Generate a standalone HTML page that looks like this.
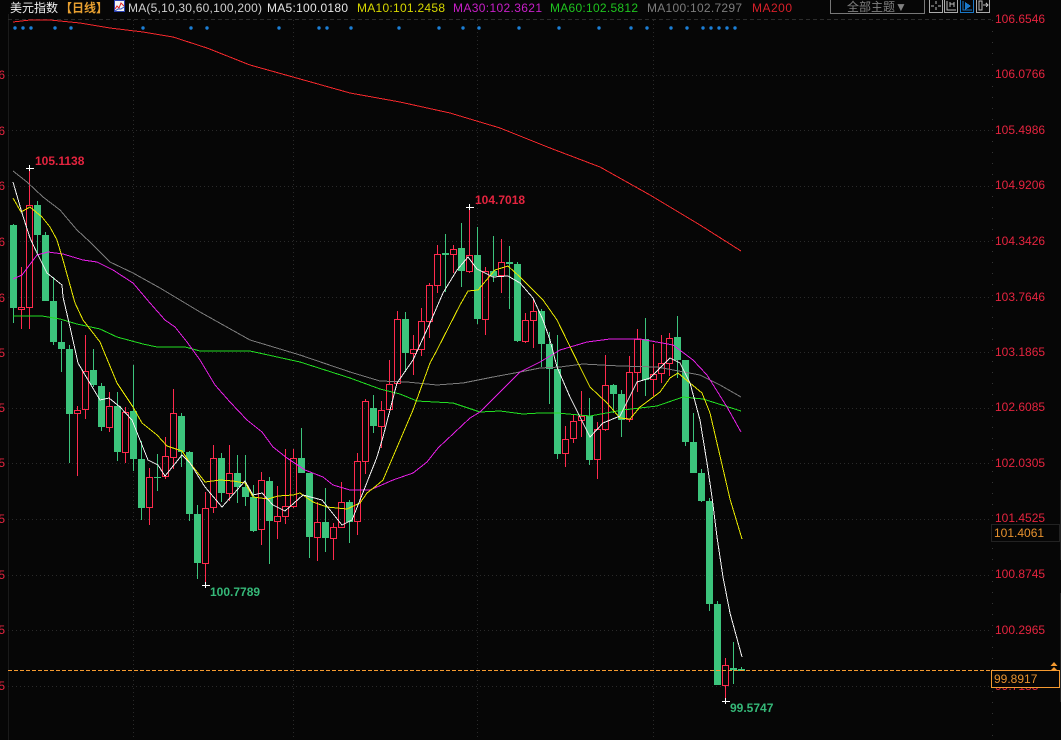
<!DOCTYPE html>
<html lang="zh">
<head>
<meta charset="utf-8">
<title>美元指数 日线</title>
<style>
html,body{margin:0;padding:0;background:#060606;width:1061px;height:740px;overflow:hidden}
svg{display:block;position:absolute;left:0;top:0}
text{font-family:"Liberation Sans","Noto Sans CJK SC",sans-serif;font-size:12px}
.ax{fill:#e5243f}
.b{font-weight:bold}
</style>
</head>
<body>
<svg width="1061" height="740" viewBox="0 0 1061 740" xmlns="http://www.w3.org/2000/svg">
<rect width="1061" height="740" fill="#060606"/>

<!-- axis + grid -->
<g shape-rendering="crispEdges" fill="none">
<path d="M8.5 14V740" stroke="#1a1a1a"/>
<path d="M8 19.5H991" stroke="#2c2c2c" stroke-dasharray="4 3"/>
<path d="M8 75.5H991M8 130.5H991M8 186.5H991M8 241.5H991M8 297.5H991M8 352.5H991M8 408.5H991M8 463.5H991M8 519.5H991M8 575.5H991M8 630.5H991M8 686.5H991" stroke="#2a2a2a" stroke-dasharray="1 3"/>
<path d="M133.5 20V740M293.5 20V740M477.5 20V740M653.5 20V740" stroke="#2a2a2a" stroke-dasharray="1 3"/>
<path d="M992.5 20V740" stroke="#333" stroke-dasharray="1 10"/>
<path d="M1060.5 480V560M1060.5 593V702" stroke="#222"/>
</g>

<!-- left clipped labels -->
<g class="ax" text-anchor="end">
<text x="5" y="79" class="ax">6</text>
<text x="5" y="135" class="ax">6</text>
<text x="5" y="190" class="ax">6</text>
<text x="5" y="246" class="ax">6</text>
<text x="5" y="302" class="ax">6</text>
<text x="5" y="357" class="ax">5</text>
<text x="5" y="412" class="ax">5</text>
<text x="5" y="467" class="ax">5</text>
<text x="5" y="523" class="ax">5</text>
<text x="5" y="579" class="ax">5</text>
<text x="5" y="634" class="ax">5</text>
<text x="5" y="690" class="ax">5</text>
</g>

<!-- signal dots -->
<g fill="#1c7fd6">
<circle cx="15" cy="28" r="1.7"/><circle cx="23" cy="28" r="1.7"/><circle cx="31" cy="28" r="1.7"/><circle cx="55" cy="28" r="1.7"/><circle cx="71" cy="28" r="1.7"/><circle cx="143" cy="28" r="1.7"/><circle cx="191" cy="28" r="1.7"/><circle cx="207" cy="28" r="1.7"/><circle cx="279" cy="28" r="1.7"/><circle cx="319" cy="28" r="1.7"/><circle cx="327" cy="28" r="1.7"/><circle cx="351" cy="28" r="1.7"/><circle cx="399" cy="28" r="1.7"/><circle cx="439" cy="28" r="1.7"/><circle cx="463" cy="28" r="1.7"/><circle cx="479" cy="28" r="1.7"/><circle cx="519" cy="28" r="1.7"/><circle cx="559" cy="28" r="1.7"/><circle cx="599" cy="28" r="1.7"/><circle cx="631" cy="28" r="1.7"/><circle cx="647" cy="28" r="1.7"/><circle cx="671" cy="28" r="1.7"/><circle cx="687" cy="28" r="1.7"/><circle cx="703" cy="28" r="1.7"/><circle cx="711" cy="28" r="1.7"/><circle cx="719" cy="28" r="1.7"/><circle cx="727" cy="28" r="1.7"/><circle cx="735" cy="28" r="1.7"/>
</g>

<!-- green candles -->
<g shape-rendering="crispEdges">
<path fill="none" stroke="#3cc47c" d="M13.5 224V323M37.5 201V253M45.5 232V301M53.5 277V345M61.5 321V372M69.5 345V463M93.5 349V387M101.5 383V431M117.5 392V461M133.5 365V471M141.5 441V520M157.5 454V491M181.5 413V467M189.5 451V521M197.5 505V579M221.5 453V502M237.5 455V503M245.5 455V506M253.5 485V532M269.5 477V564M301.5 428V473M309.5 473V558M325.5 488V552M349.5 500V543M373.5 395V433M405.5 312V372M445.5 234V292M461.5 223V287M477.5 227V324M493.5 236V282M509.5 246V309M517.5 262V342M541.5 309V367M549.5 332V404M557.5 335V459M589.5 398V465M613.5 384V413M621.5 390V437M645.5 318V396M677.5 316V378M685.5 360V446M693.5 413V473M701.5 469V502M709.5 498V611M717.5 601V685M733.5 642V684M741.5 667V671"/>
<path fill="#3cc47c" d="M10 225h7V308h-7zM34 205h7V235h-7zM42 235h7V301h-7zM50 301h7V342h-7zM58 342h7V349h-7zM66 349h7V414h-7zM90 370h7V385h-7zM98 386h7V427h-7zM114 406h7V452h-7zM130 411h7V459h-7zM138 459h7V508h-7zM154 477h7V478h-7zM178 416h7V452h-7zM186 452h7V514h-7zM194 514h7V563h-7zM218 458h7V493h-7zM234 473h7V487h-7zM242 487h7V497h-7zM250 497h7V531h-7zM266 481h7V521h-7zM298 458h7V473h-7zM306 473h7V537h-7zM322 522h7V538h-7zM346 502h7V522h-7zM370 408h7V426h-7zM402 319h7V353h-7zM442 253h7V255h-7zM458 248h7V271h-7zM474 255h7V319h-7zM490 271h7V276h-7zM506 262h7V264h-7zM514 264h7V341h-7zM538 311h7V344h-7zM546 344h7V369h-7zM554 369h7V454h-7zM586 416h7V460h-7zM610 385h7V394h-7zM618 394h7V420h-7zM642 339h7V380h-7zM674 337h7V360h-7zM682 360h7V442h-7zM690 442h7V473h-7zM698 473h7V501h-7zM706 501h7V604h-7zM714 604h7V685h-7zM730 668h7V670h-7zM738 669h7V671h-7z"/>
</g>

<!-- red candles -->
<g shape-rendering="crispEdges" fill="none" stroke="#ff2a4d">
<path d="M21.5 267V307M21.5 310V329M29.5 168V205M29.5 308V329M77.5 406V410M77.5 414V476M85.5 335V371M85.5 410V419M109.5 392V406M109.5 428V432M125.5 407V412M125.5 453V463M149.5 468V477M149.5 508V525M165.5 437V456M165.5 477V479M173.5 389V413M173.5 458V469M205.5 492V508M205.5 564V585M213.5 445V458M213.5 508V513M229.5 445V473M229.5 494V501M261.5 472V480M261.5 530V545M277.5 486V516M277.5 522V539M285.5 449V506M285.5 517V524M293.5 449V458M293.5 507V508M317.5 502V522M317.5 538V561M333.5 523V527M333.5 539V560M341.5 482V502M357.5 453V461M357.5 522V535M365.5 399V401M365.5 462V474M381.5 401V410M381.5 427V448M389.5 360V384M397.5 311V319M413.5 335V349M413.5 354V375M421.5 308V321M421.5 350V356M429.5 283V285M429.5 322V338M437.5 245V254M437.5 286V293M453.5 245V249M453.5 255V273M469.5 207V255M469.5 272V273M485.5 267V271M485.5 320V335M501.5 239V262M501.5 276V293M525.5 313V320M525.5 342V343M533.5 299V311M533.5 321V348M565.5 426V439M565.5 454V467M573.5 414V421M573.5 439V443M581.5 391V416M581.5 421V437M597.5 422V429M597.5 460V479M605.5 355V385M605.5 430V431M629.5 356V372M629.5 420V422M637.5 329V339M637.5 373V392M653.5 344V374M653.5 380V396M661.5 335V363M661.5 374V383M669.5 333V338M669.5 364V376M725.5 658V665M725.5 686V701"/>
<path d="M18.5 307.5h6V309.5h-6zM26.5 205.5h6V307.5h-6zM74.5 410.5h6V413.5h-6zM82.5 371.5h6V409.5h-6zM106.5 406.5h6V427.5h-6zM122.5 412.5h6V452.5h-6zM146.5 477.5h6V507.5h-6zM162.5 456.5h6V476.5h-6zM170.5 413.5h6V457.5h-6zM202.5 508.5h6V563.5h-6zM210.5 458.5h6V507.5h-6zM226.5 473.5h6V493.5h-6zM258.5 480.5h6V529.5h-6zM274.5 516.5h6V521.5h-6zM282.5 506.5h6V516.5h-6zM290.5 458.5h6V506.5h-6zM314.5 522.5h6V537.5h-6zM330.5 527.5h6V538.5h-6zM338.5 502.5h6V527.5h-6zM354.5 461.5h6V521.5h-6zM362.5 401.5h6V461.5h-6zM378.5 410.5h6V426.5h-6zM386.5 384.5h6V409.5h-6zM394.5 319.5h6V383.5h-6zM410.5 349.5h6V353.5h-6zM418.5 321.5h6V349.5h-6zM426.5 285.5h6V321.5h-6zM434.5 254.5h6V285.5h-6zM450.5 249.5h6V254.5h-6zM466.5 255.5h6V271.5h-6zM482.5 271.5h6V319.5h-6zM498.5 262.5h6V275.5h-6zM522.5 320.5h6V341.5h-6zM530.5 311.5h6V320.5h-6zM562.5 439.5h6V453.5h-6zM570.5 421.5h6V438.5h-6zM578.5 416.5h6V420.5h-6zM594.5 429.5h6V459.5h-6zM602.5 385.5h6V429.5h-6zM626.5 372.5h6V419.5h-6zM634.5 339.5h6V372.5h-6zM650.5 374.5h6V379.5h-6zM658.5 363.5h6V373.5h-6zM666.5 338.5h6V363.5h-6zM722.5 665.5h6V685.5h-6z"/>
</g>

<!-- moving averages -->
<g fill="none" stroke-width="1" shape-rendering="crispEdges">
<polyline stroke="#f5282c" points="13,22 30,20 50,20 80,23 110,28 143,32 173,37 207,48 250,65 293,77 350,93 400,102 450,113 500,128 550,148 600,167 650,195 700,225 741,251"/>
<polyline stroke="#7c7c7c" points="13,171 27,182 43,197 60,210 77,230 90,242 110,262 133,273 160,288 180,300 200,312 250,340 300,355 350,372 380,381 407,382 437,385 463,383 493,377 520,372 540,368 560,367 583,364 620,366 657,367 700,375 720,385 741,397"/>
<polyline stroke="#22dd22" points="13,316 27,316 42,316 60,319 77,324 100,329 117,337 143,344 157,347 185,347 200,351 250,351 300,362 350,378 380,389 400,394 417,401 453,403 480,412 500,411 523,414 540,413 557,413 590,416 623,410 657,406 683,397 703,399 741,411"/>
<polyline stroke="#e61fe6" points="13,279 22,275 37,255 48,252 63,254 83,260 97,262 113,270 133,283 150,303 165,320 175,327 187,342 200,360 215,385 230,402 247,420 262,432 273,447 287,458 305,470 323,477 333,485 350,490 370,490 393,480 413,473 427,462 438,448 470,418 480,412 520,372 540,362 560,350 587,342 610,339 640,339 673,345 693,360 707,375 727,407 741,432"/>
<polyline stroke="#e8e800" points="13,198 21,212 30,207 42,217 50,227 57,240 63,260 75,303 83,320 100,342 117,383 133,407 142,423 157,435 167,446 182,451 190,463 205,482 220,480 233,481 245,483 253,497 268,499 278,496 293,495 300,493 313,502 327,507 347,509 360,503 367,493 376,486 383,480 413,410 430,363 437,350 460,305 468,291 478,290 495,270 508,266 520,277 543,300 557,320 580,367 590,387 607,403 620,418 630,419 640,407 660,392 670,378 678,373 702,393 710,413 730,499 742,539"/>
<polyline stroke="#f2f2f2" points="13,182 22,213 30,238 37,253 47,273 62,285 63,297 70,327 78,363 88,380 100,400 109,398 120,407 132,420 148,460 158,465 165,476 182,455 190,463 205,487 222,507 245,481 253,495 262,493 273,505 285,511 303,495 322,500 342,525 352,520 360,500 377,457 383,437 397,383 413,360 430,323 443,293 457,270 468,257 477,269 493,277 508,276 520,283 533,298 543,320 550,340 557,367 570,397 583,423 590,437 603,423 620,416 628,400 637,382 650,378 670,358 680,363 690,383 700,420 707,463 712,497 717,537 723,577 730,613 742,657"/>
</g>

<!-- extreme markers -->
<g stroke="#fff" shape-rendering="crispEdges" fill="none">
<path d="M26 168.5h8M29.5 165v6"/>
<path d="M202 585.5h8M205.5 582v6"/>
<path d="M466 207.5h8M469.5 204v6"/>
<path d="M722 701.5h8M725.5 698v6"/>
</g>
<text x="35" y="165" class="b" fill="#e5243f">105.1138</text>
<text x="475" y="204" class="b" fill="#e5243f">104.7018</text>
<text x="210" y="596" class="b" fill="#35b878">100.7789</text>
<text x="730" y="712" class="b" fill="#35b878">99.5747</text>

<!-- last price dashed line -->
<path d="M8 670.5H991" stroke="#f59a30" stroke-dasharray="4 2" shape-rendering="crispEdges"/>

<!-- right axis labels -->
<g class="ax">
<text x="995" y="23" class="ax">106.6546</text>
<text x="995" y="78" class="ax">106.0766</text>
<text x="995" y="134" class="ax">105.4986</text>
<text x="995" y="189" class="ax">104.9206</text>
<text x="995" y="245" class="ax">104.3426</text>
<text x="995" y="301" class="ax">103.7646</text>
<text x="995" y="356" class="ax">103.1865</text>
<text x="995" y="411" class="ax">102.6085</text>
<text x="995" y="467" class="ax">102.0305</text>
<text x="995" y="522" class="ax">101.4525</text>
<text x="995" y="578" class="ax">100.8745</text>
<text x="995" y="634" class="ax">100.2965</text>
<text x="995" y="690" class="ax">99.7185</text>
</g>

<rect x="991.500" y="524.500" width="68" height="17" fill="#060606" stroke="#222" shape-rendering="crispEdges"/>
<text x="994" y="537" fill="#e8922e">101.4061</text>
<rect x="991.500" y="670.500" width="68" height="17" fill="#060606" stroke="#f59a30" shape-rendering="crispEdges"/>
<text x="994" y="683" fill="#e8922e">99.8917</text>
<path d="M1054 662l3.500 4h-7zM1054 667l3.500 3.500h-7z" fill="#f59a30"/>

<!-- header -->
<text x="10" y="12" fill="#f0f0f0">美元指数</text>
<text x="60" y="12" fill="#e8a030" font-weight="bold">【日线】</text>
<rect x="114.500" y="0.500" width="10" height="11" fill="#f4f4f4" stroke="#2a3fb0" shape-rendering="crispEdges"/>
<path d="M115 9l2-3 2 2 2-5 3 3" fill="none" stroke="#e02020"/>
<path d="M115 11l3-2 3 0 3-2" fill="none" stroke="#3050c0"/>
<text x="128" y="12" fill="#cfcfcf" textLength="134" lengthAdjust="spacing">MA(5,10,30,60,100,200)</text>
<text x="267" y="12" fill="#e6e6e6" textLength="81" lengthAdjust="spacing">MA5:100.0180</text>
<text x="357" y="12" fill="#d8d800" textLength="88" lengthAdjust="spacing">MA10:101.2458</text>
<text x="453" y="12" fill="#c91fc9" textLength="89" lengthAdjust="spacing">MA30:102.3621</text>
<text x="550" y="12" fill="#1fc41f" textLength="88" lengthAdjust="spacing">MA60:102.5812</text>
<text x="647" y="12" fill="#7c7c7c" textLength="95" lengthAdjust="spacing">MA100:102.7297</text>
<text x="752" y="12" fill="#d8202a" textLength="40" lengthAdjust="spacing">MA200</text>

<!-- theme button -->
<rect x="830.500" y="-2" width="94" height="15.500" fill="none" stroke="#777" shape-rendering="crispEdges"/>
<text x="847" y="11" fill="#808080">全部主题▼</text>

<!-- toolbar icons -->
<g fill="none" shape-rendering="crispEdges">
<rect x="929.500" y="-1" width="13" height="13.500" stroke="#aaa"/>
<path d="M936 1v3M936 7v3M931 6h3M938 6h3" stroke="#bbb"/>
<rect x="944.500" y="-1" width="13" height="13.500" stroke="#aaa"/>
<path d="M947 1v9h9M950 2v5M954 2v5M950 4h4" stroke="#bbb"/>
<rect x="960.500" y="-1" width="13" height="13.500" stroke="#1a78c8"/>
<path d="M963 1v9h9" stroke="#1a78c8"/>
<path d="M965 2l6 4-6 4z" fill="#1a78c8" stroke="none"/>
<rect x="976.500" y="-1" width="13" height="13.500" stroke="#aaa"/>
<path d="M979 1v9h3V1zM983 5h5M986 3l2 2-2 2" stroke="#bbb"/>
</g>
</svg>
</body>
</html>
